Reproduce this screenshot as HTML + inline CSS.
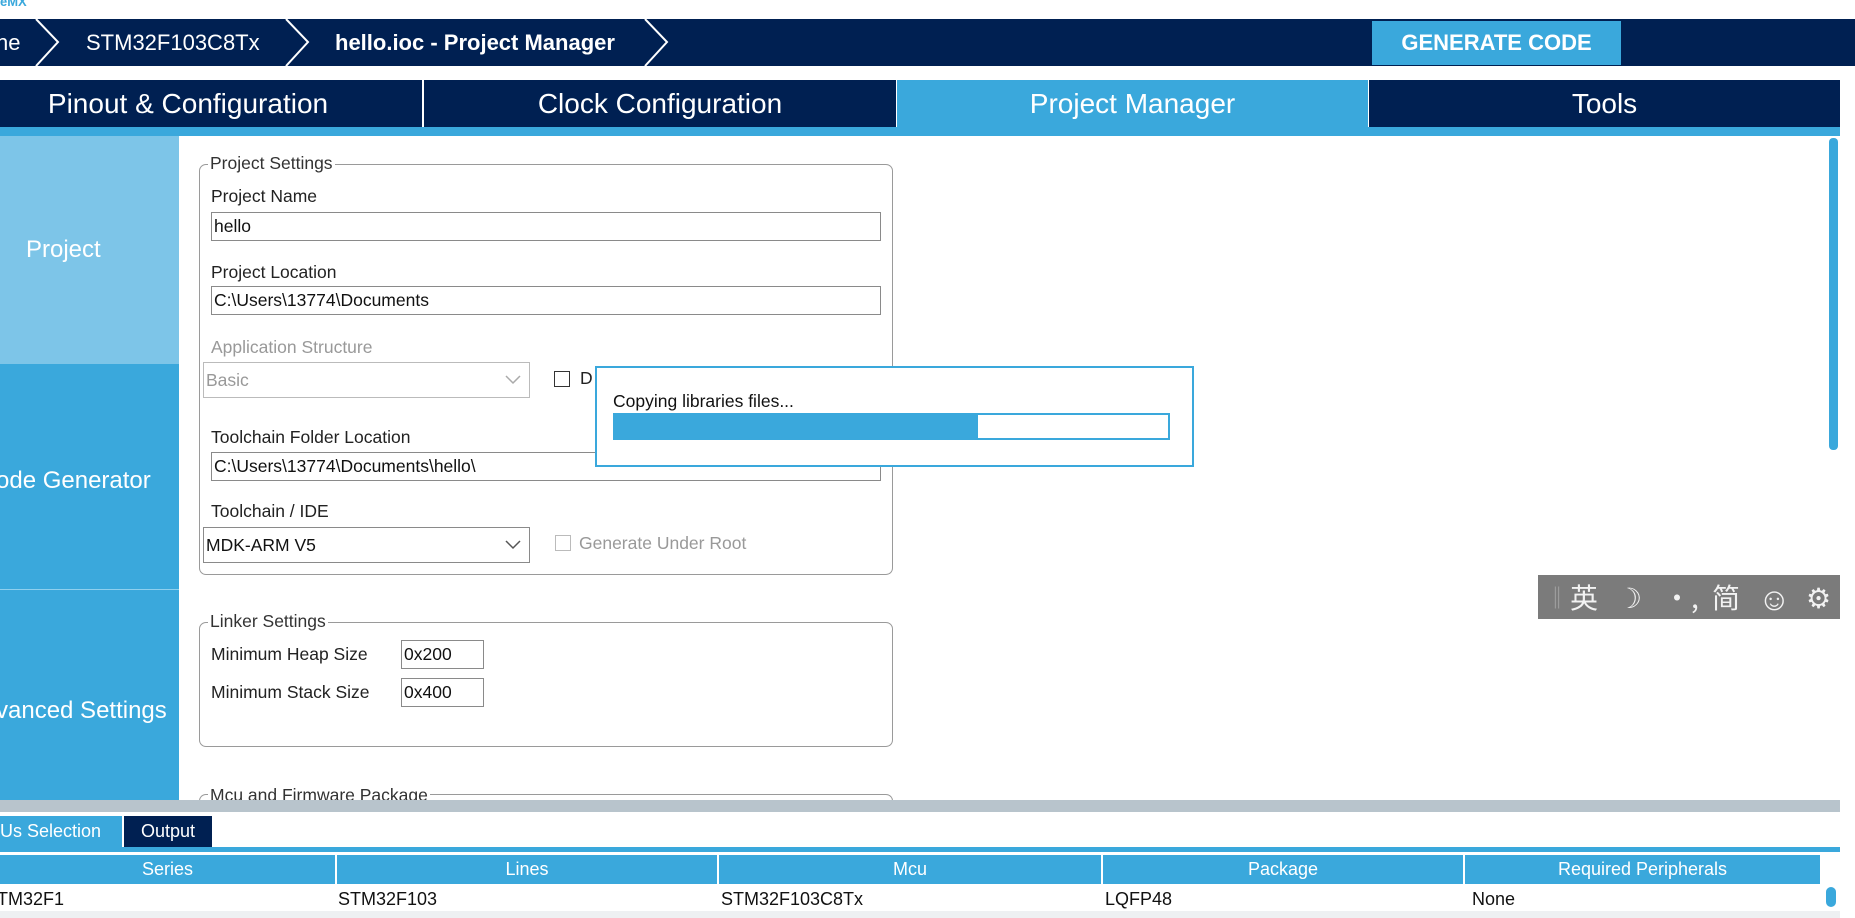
<!DOCTYPE html><html><head><meta charset="utf-8"><style>
*{box-sizing:border-box;margin:0;padding:0}
body{width:1855px;height:918px;overflow:hidden;background:#fff;font-family:"Liberation Sans",Arial,sans-serif;position:relative}
.a{position:absolute}
.nav{background:#002052}
.lbl{position:absolute;font-size:17.5px;color:#222}
.inp{position:absolute;border:1px solid #8a8a8a;background:#fff;font-size:17.5px;padding:3px 2px;color:#111;height:29px}
.fs{position:absolute;border:1px solid #9a9a9a;border-radius:7px}
.leg{position:absolute;top:-12px;left:8px;background:#fff;padding:0 2px;font-size:17.5px;color:#333}
.tab{position:absolute;top:80px;height:47px;color:#fff;font-size:28px;text-align:center;line-height:47px}
.th{position:absolute;top:855px;height:29px;background:#3aa8dc;color:#fff;font-size:18px;text-align:center;line-height:29px;border-right:2px solid #fff}
.td{position:absolute;top:884px;height:27px;font-size:18px;line-height:31px;color:#111}
.ime{position:absolute;top:0;line-height:44px;font-size:28px;color:#f2f2f2}
.chev{position:absolute;right:8px;top:12px}
</style></head><body>
<div class="a" style="left:0;top:-6px;font-size:13px;color:#3aa8dc;font-weight:bold">eMX</div>
<div class="a nav" style="left:0;top:19px;width:1855px;height:47px"></div>
<svg class="a" style="left:0;top:19px" width="700" height="47"><g stroke="#fff" stroke-width="2" fill="none"><path d="M36 0 L58 23 L36 47"/><path d="M286 0 L308 23 L286 47"/><path d="M645 0 L667 23 L645 47"/></g></svg>
<div class="a" style="left:-4px;top:30px;color:#fff;font-size:22px">ne</div>
<div class="a" style="left:86px;top:30px;color:#fff;font-size:22px">STM32F103C8Tx</div>
<div class="a" style="left:335px;top:30px;color:#fff;font-size:22px;font-weight:bold">hello.ioc - Project Manager</div>
<div class="a" style="left:1372px;top:21px;width:249px;height:44px;background:#3aa8dc;color:#fff;font-size:22px;font-weight:bold;text-align:center;line-height:44px">GENERATE CODE</div>
<div class="tab nav" style="left:0;width:422px;padding-right:46px">Pinout &amp; Configuration</div>
<div class="tab nav" style="left:424px;width:472px">Clock Configuration</div>
<div class="tab" style="left:897px;width:471px;background:#3aa8dc">Project Manager</div>
<div class="tab nav" style="left:1369px;width:471px">Tools</div>
<div class="a" style="left:0;top:127px;width:1840px;height:9px;background:#3aa8dc"></div>
<div class="a" style="left:0;top:136px;width:179px;height:664px;background:#3aa8dc"></div>
<div class="a" style="left:0;top:136px;width:179px;height:228px;background:#7dc5e8;color:#fff;font-size:24px;line-height:228px;padding-left:26px">Project</div>
<div class="a" style="left:-4px;top:467px;color:#fff;font-size:24px">ode Generator</div>
<div class="a" style="left:0;top:589px;width:179px;height:1px;background:#8fd0ee"></div>
<div class="a" style="left:-4px;top:697px;color:#fff;font-size:24px">vanced Settings</div>
<div class="a" style="left:1828px;top:136px;width:12px;height:664px;background:#fff"></div>
<div class="a" style="left:1829px;top:138px;width:9px;height:312px;background:#3aa8dc;border-radius:4px"></div>
<div class="fs" style="left:199px;top:164px;width:694px;height:411px"><div class="leg">Project Settings</div></div>
<div class="lbl" style="left:211px;top:186px">Project Name</div>
<div class="inp" style="left:211px;top:212px;width:670px">hello</div>
<div class="lbl" style="left:211px;top:262px">Project Location</div>
<div class="inp" style="left:211px;top:286px;width:670px">C:\Users\13774\Documents</div>
<div class="lbl" style="left:211px;top:337px;color:#999">Application Structure</div>
<div class="inp" style="left:203px;top:362px;width:327px;height:36px;color:#999;padding-top:7px;border-color:#bbb">Basic<svg class="chev" width="16" height="10"><path d="M1 1 L8 8 L15 1" stroke="#aaa" stroke-width="1.5" fill="none"/></svg></div>
<div class="a" style="left:554px;top:371px;width:16px;height:16px;border:1px solid #333"></div>
<div class="lbl" style="left:580px;top:368px">D</div>
<div class="lbl" style="left:211px;top:427px">Toolchain Folder Location</div>
<div class="inp" style="left:211px;top:452px;width:670px">C:\Users\13774\Documents\hello\</div>
<div class="lbl" style="left:211px;top:501px">Toolchain / IDE</div>
<div class="inp" style="left:203px;top:527px;width:327px;height:36px;padding-top:7px">MDK-ARM V5<svg class="chev" width="16" height="10"><path d="M1 1 L8 8 L15 1" stroke="#555" stroke-width="1.5" fill="none"/></svg></div>
<div class="a" style="left:555px;top:535px;width:16px;height:16px;border:1px solid #bbb"></div>
<div class="lbl" style="left:579px;top:533px;color:#999">Generate Under Root</div>
<div class="fs" style="left:199px;top:622px;width:694px;height:125px"><div class="leg">Linker Settings</div></div>
<div class="lbl" style="left:211px;top:644px">Minimum Heap Size</div>
<div class="inp" style="left:401px;top:640px;width:83px">0x200</div>
<div class="lbl" style="left:211px;top:682px">Minimum Stack Size</div>
<div class="inp" style="left:401px;top:678px;width:83px">0x400</div>
<div class="fs" style="left:199px;top:794px;width:694px;height:14px;border-bottom:none"><div class="leg" style="top:-10px">Mcu and Firmware Package</div></div>
<div class="a" style="left:595px;top:366px;width:599px;height:101px;border:2px solid #3aa8dc;background:#fff"></div>
<div class="a" style="left:613px;top:391px;font-size:17.5px;color:#111">Copying libraries files...</div>
<div class="a" style="left:613px;top:413px;width:557px;height:27px;border:2px solid #3aa8dc;background:#fff"><div style="width:363px;height:100%;background:#3aa8dc"></div></div>
<div class="a" style="left:1538px;top:575px;width:302px;height:44px;background:#7b7b7b;font-family:'Noto Sans CJK SC',sans-serif">
<div class="ime" style="left:8px;font-size:22px;color:#aaa">‖</div>
<div class="ime" style="left:32px">英</div>
<div class="ime" style="left:79px">☽</div>
<div class="ime" style="left:125px">•,</div>
<div class="ime" style="left:174px">简</div>
<div class="ime" style="left:220px;font-size:32px">☺</div>
<div class="ime" style="left:268px">⚙</div>
</div>
<div class="a" style="left:0;top:800px;width:1840px;height:12px;background:#b8c4cc"></div>
<div class="a" style="left:0;top:816px;width:122px;height:31px;background:#3aa8dc;color:#fff;font-size:18px;line-height:31px">Us Selection</div>
<div class="a nav" style="left:124px;top:816px;width:88px;height:31px;color:#fff;font-size:18px;line-height:31px;text-align:center">Output</div>
<div class="a" style="left:0;top:847px;width:1840px;height:5px;background:#3aa8dc"></div>
<div class="th" style="left:0;width:337px">Series</div>
<div class="th" style="left:337px;width:382px">Lines</div>
<div class="th" style="left:719px;width:384px">Mcu</div>
<div class="th" style="left:1103px;width:362px">Package</div>
<div class="th" style="left:1465px;width:357px">Required Peripherals</div>
<div class="td" style="left:-3px">TM32F1</div>
<div class="td" style="left:338px">STM32F103</div>
<div class="td" style="left:721px">STM32F103C8Tx</div>
<div class="td" style="left:1105px">LQFP48</div>
<div class="td" style="left:1472px">None</div>
<div class="a" style="left:0;top:911px;width:1840px;height:7px;background:#eef0f2"></div>
<div class="a" style="left:1826px;top:887px;width:10px;height:20px;background:#3aa8dc;border-radius:5px"></div>
</body></html>
